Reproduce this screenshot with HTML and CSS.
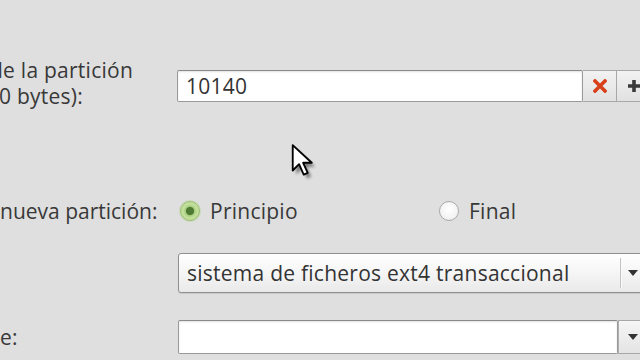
FILE: index.html
```html
<!DOCTYPE html>
<html lang="es">
<head>
<meta charset="utf-8">
<title>Crear nueva partición</title>
<link rel="stylesheet" href="styles.css">
</head>
<body>
<div class="form">
  <div class="row row-size">
    <div class="label label-size">
      <span class="line line-1">de la partición</span>
      <span class="line line-2">0 bytes):</span>
    </div>
    <div class="spin">
      <div class="entry spin-entry">10140</div>
      <div class="spin-btn">
        <svg width="14" height="14" viewBox="0 0 14 14"><path d="M2 2 L12 12 M12 2 L2 12" stroke="#d8401a" stroke-width="3.6" stroke-linecap="square"/></svg>
      </div>
      <div class="spin-btn">
        <svg width="14" height="14" viewBox="0 0 14 14"><path d="M7 1 V13 M1 7 H13" stroke="#3a3a3a" stroke-width="3.6"/></svg>
      </div>
    </div>
  </div>

  <div class="row row-align">
    <div class="label">nueva partición:</div>
    <div class="radios">
      <label class="radio radio-first"><span class="dot dot-on"></span>Principio</label>
      <label class="radio"><span class="dot"></span>Final</label>
    </div>
  </div>

  <div class="row row-fs">
    <div class="label"></div>
    <div class="combo">
      <span class="combo-text">sistema de ficheros ext4 transaccional</span>
      <span class="combo-sep"></span>
      <span class="arrow"></span>
    </div>
  </div>

  <div class="row row-last">
    <div class="label">e:</div>
    <div class="combo-entry">
      <div class="entry combo-field"></div>
      <div class="combo-btn"><span class="arrow"></span></div>
    </div>
  </div>
</div>

<svg class="cursor" width="30" height="40" viewBox="0 0 26 34">
  <defs>
    <filter id="sh" x="-50%" y="-50%" width="200%" height="200%">
      <feGaussianBlur stdDeviation="1.6"/>
    </filter>
  </defs>
  <path d="M3 3 L3 25 L8.5 19.5 L12.5 28.5 L16 27 L12 18.3 L19.5 18.3 Z" fill="#000" opacity="0.45" filter="url(#sh)" transform="translate(1.5,2)"/>
  <path d="M1.5 1.5 L1.5 23.5 L7 18 L11 27 L14.5 25.5 L10.5 16.8 L18 16.8 Z" fill="#fff" stroke="#000" stroke-width="1.6" stroke-linejoin="round"/>
</svg>
</body>
</html>
```

FILE: styles.css
```css
html, body {
  margin: 0;
  padding: 0;
}
body {
  width: 640px;
  height: 360px;
  overflow: hidden;
  background: #dfdfdf;
  font-family: "Open Sans", "DejaVu Sans", sans-serif;
  font-size: 21px;
  letter-spacing: 0.25px;
  color: #383838;
  position: relative;
}
.form {
  display: flex;
  flex-direction: column;
  padding-top: 57px;
}
.row {
  display: grid;
  grid-template-columns: 178px 1fr;
  align-items: center;
  line-height: 26px;
}
.row-size {
  align-items: start;
  height: 52px;
}
.row-align {
  margin-top: 89px;
  height: 26px;
}
.row-fs {
  margin-top: 29px;
  height: 40px;
}
.row-last {
  margin-top: 27px;
  height: 34px;
}
.label {
  white-space: nowrap;
  overflow: visible;
}
.label-size {
  display: flex;
  flex-direction: column;
}
.line-1 {
  margin-left: -10px;
}
.line-2 {
  margin-left: -1px;
}
.row-align .label {
  letter-spacing: 0;
}
.spin {
  display: flex;
  margin-top: 13px;
  margin-left: -1px;
  height: 32px;
  width: 480px;
}
.entry {
  box-sizing: border-box;
  background: #fff;
  border: 1px solid #9a9a9a;
  border-top-color: #8a8a8a;
  box-shadow: inset 0 1px 2px rgba(0,0,0,0.12);
  border-radius: 2px;
}
.spin-entry {
  width: 406px;
  height: 32px;
  padding-left: 8px;
  line-height: 30px;
  color: #333;
}
.spin-btn {
  box-sizing: border-box;
  width: 34px;
  height: 32px;
  display: flex;
  align-items: center;
  justify-content: center;
  background: linear-gradient(#f2f2f2, #e1e1e1);
  border: 1px solid #a8a8a8;
  border-left: none;
}
.radios {
  display: flex;
  align-items: center;
}
.radio {
  display: flex;
  align-items: center;
  gap: 10px;
  color: #383838;
}
.radio-first {
  width: 259px;
  margin-left: 2px;
}
.dot {
  box-sizing: border-box;
  width: 20px;
  height: 20px;
  border-radius: 50%;
  border: 1px solid #a9a9a9;
  background: radial-gradient(circle at 50% 40%, #ffffff 0%, #f4f4f4 60%, #e6e6e6 100%);
  display: inline-block;
}
.dot-on {
  border-color: #9cbf72;
  background: radial-gradient(circle, #4e7a33 0 3.6px, #a8cf7e 4.6px, #c4e09e 7px, #b1d387 100%);
  box-shadow: 0 0 0 1px rgba(170,210,130,0.35);
}
.combo {
  box-sizing: border-box;
  height: 40px;
  width: 480px;
  display: flex;
  align-items: center;
  background: linear-gradient(#ffffff, #f3f3f3 60%, #e9e9e9);
  border: 1px solid #8f8f8f;
  border-radius: 3px;
  box-shadow: 0 1px 1px rgba(0,0,0,0.1);
  padding-left: 8px;
}
.combo-text {
  width: 433px;
  white-space: nowrap;
  color: #333;
}
.combo-sep {
  width: 1px;
  height: 30px;
  background: #c4c4c4;
  box-shadow: 1px 0 0 #fafafa;
}
.arrow {
  width: 0;
  height: 0;
  border-left: 5px solid transparent;
  border-right: 5px solid transparent;
  border-top: 6px solid #333;
  margin-left: 7px;
}
.combo-entry {
  display: flex;
  height: 34px;
  width: 480px;
}
.combo-field {
  width: 441px;
  height: 34px;
}
.combo-btn {
  box-sizing: border-box;
  height: 34px;
  width: 40px;
  display: flex;
  align-items: center;
  background: linear-gradient(#f6f6f6, #e4e4e4);
  border: 1px solid #a8a8a8;
  border-left: 1px solid #b0b0b0;
}
.combo-btn .arrow {
  margin-left: 9px;
}
.cursor {
  position: absolute;
  left: 291px;
  top: 143px;
}
```
